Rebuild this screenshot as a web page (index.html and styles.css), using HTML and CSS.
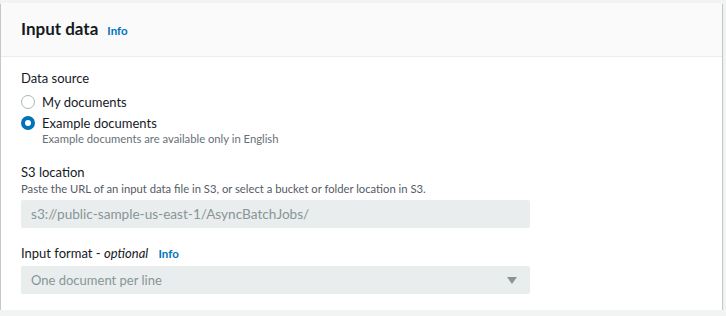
FILE: index.html
```html
<!DOCTYPE html>
<html lang="en">
<head>
<meta charset="UTF-8">
<title>Input data</title>
<link rel="stylesheet" href="styles.css">
</head>
<body>

<div class="panel">
  <div class="panel-header">
    <h2>Input data</h2>
    <a class="info" href="#">Info</a>
  </div>

  <div class="panel-body">
    <div class="field">
      <div class="label">Data source</div>
      <label class="radio first">
        <span class="dot"></span>
        <span class="radio-text">My documents</span>
      </label>
      <label class="radio">
        <span class="dot checked"></span>
        <span class="radio-text">Example documents
          <span class="hint">Example documents are available only in English</span>
        </span>
      </label>
    </div>

    <div class="field">
      <div class="label">S3 location</div>
      <div class="desc">Paste the URL of an input data file in S3, or select a bucket or folder location in S3.</div>
      <div class="input url">s3://public-sample-us-east-1/AsyncBatchJobs/</div>
    </div>

    <div class="field">
      <div class="label">Input format - <i>optional</i> <a class="info" href="#">Info</a></div>
      <div class="input select">
        <span>One document per line</span>
        <span class="caret"></span>
      </div>
    </div>
  </div>
</div>

</body>
</html>
```

FILE: styles.css
```css
*{box-sizing:border-box}
body{
  margin:0;
  padding:3px 4px 0 1px;
  background:#f2f3f3;
  font-family:Lato, "Open Sans", Arial, sans-serif;
  color:#16191f;
  font-size:13px;
}

.panel{
  background:#fff;
  box-shadow:0 1px 1px 0 rgba(0,28,36,.3), 1px 1px 1px 0 rgba(0,28,36,.15), -1px 1px 1px 0 rgba(0,28,36,.15);
}

.panel-header{
  display:flex;
  align-items:baseline;
  gap:9px;
  height:54px;
  padding:15px 20px 0;
  background:#fafafa;
  border-bottom:1px solid #eaeded;
}
.panel-header h2{
  margin:0;
  font-size:17px;
  font-weight:700;
  line-height:22px;
}

.info{
  color:#0073bb;
  font-size:11.5px;
  font-weight:700;
  text-decoration:none;
}

.panel-body{
  padding:12px 20px 16px;
}

.field{margin-bottom:18px}
.field + .field{margin-bottom:16px}
.field:last-child{margin-bottom:0}

.label{
  line-height:18px;
}
.label .info{margin-left:7px}

.radio{
  display:flex;
  align-items:flex-start;
  gap:7px;
  line-height:20px;
  margin-top:1px;
}
.radio.first{margin-top:5px}
.dot{
  width:14px;
  height:14px;
  margin-top:3px;
  border:1.5px solid #aab7b8;
  border-radius:50%;
}
.dot.checked{
  border:4px solid #0073bb;
}
.radio-text{display:flex;flex-direction:column}
.hint{
  font-size:11.25px;
  line-height:12px;
  color:#687078;
}

.desc{
  font-size:11.25px;
  line-height:16px;
  color:#545b64;
  margin-bottom:3px;
}

.input{
  width:509px;
  height:28px;
  padding:0 10px;
  line-height:28px;
  background:#eaeded;
  border-radius:2px;
  color:#879596;
}
.input.url{font-size:13.6px}
.label + .input{margin-top:3px}
.select{
  display:flex;
  justify-content:space-between;
  align-items:center;
}
.caret{
  width:0;
  height:0;
  border-left:5px solid transparent;
  border-right:5px solid transparent;
  border-top:7px solid #879596;
  margin-right:3px;
}
```
